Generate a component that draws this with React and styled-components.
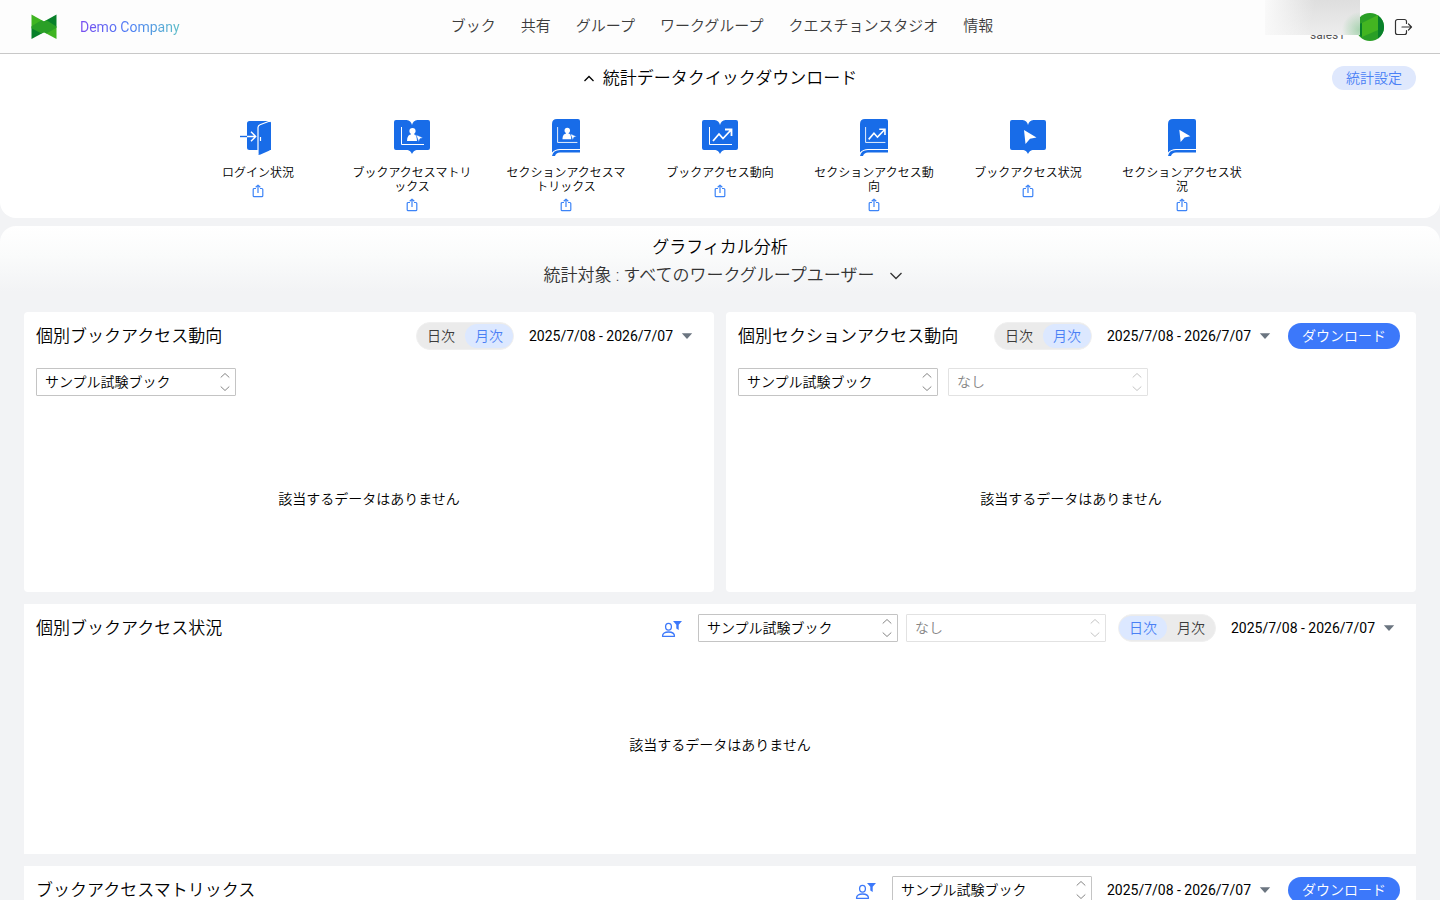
import React, { useState } from 'react';
import styled, { createGlobalStyle } from 'styled-components';

const GlobalStyle = createGlobalStyle`
  * {
    box-sizing: border-box;
  }

  body {
    margin: 0;
    background: #f2f3f5;
    color: #000;
    font-family: Roboto, "Noto Sans CJK JP", sans-serif;
    font-size: 14px;
    font-weight: 350;
  }

  button, select {
    font-family: inherit;
    font-weight: inherit;
    color: inherit;
  }
`;

const Page = styled.div`
  display: flex;
  flex-direction: column;
  height: 100vh;
  overflow: hidden;
`;

const Header = styled.header`
  display: grid;
  grid-template-columns: 1fr auto 1fr;
  align-items: center;
  flex-shrink: 0;
  height: 54px;
  padding: 0 24px 0 28px;
  background: #fdfdfd;
  border-bottom: 1px solid #c8c8c8;
`;

const Brand = styled.a`
  display: flex;
  align-items: center;
  gap: 20px;
  justify-self: start;
  text-decoration: none;
`;

const BrandName = styled.span`
  font-size: 14px;
  font-weight: 400;
  line-height: 20px;
  background: linear-gradient(90deg, #7a4df0, #4a7df5 50%, #5fc0c8);
  background-clip: text;
  color: transparent;
`;

const Nav = styled.nav`
  display: flex;
  gap: 25px;
  padding-bottom: 2px;
`;

const NavLink = styled.a`
  color: #3c3c3c;
  font-size: 15px;
  line-height: 20px;
  text-decoration: none;
  white-space: nowrap;
`;

const UserArea = styled.div`
  position: relative;
  display: flex;
  align-items: center;
  justify-content: flex-end;
  gap: 8px;
  height: 53px;
`;

const UserName = styled.span`
  align-self: flex-end;
  padding: 0 3px 11px 0;
  color: #555;
  font-size: 12px;
  font-weight: 400;
  line-height: 14px;
`;

const NameMask = styled.div`
  position: absolute;
  top: 0;
  right: 56px;
  width: 95px;
  height: 35px;
  background:
    radial-gradient(circle at 100% 85%, rgba(150, 205, 160, 0.8), rgba(150, 205, 160, 0) 18px),
    linear-gradient(100deg, #fafafa, rgba(250, 250, 250, 0) 50%),
    linear-gradient(#dedede, #ededed);
`;

const IconButton = styled.button`
  display: flex;
  align-items: center;
  justify-content: center;
  width: 24px;
  height: 24px;
  padding: 0;
  border: none;
  background: none;
  cursor: pointer;
`;

const FilterButton = styled(IconButton)`
  margin-right: 2px;
`;

const Content = styled.main`
  flex: 1;
  min-height: 0;
  overflow-y: auto;
  scrollbar-width: none;
`;

const QuickSection = styled.section`
  padding: 12px 24px 6px;
  background: #fff;
  border-radius: 0 0 16px 16px;
`;

const QuickHeader = styled.div`
  display: grid;
  grid-template-columns: 1fr auto 1fr;
  align-items: center;
  margin-bottom: 29px;
`;

const QuickTitle = styled.button`
  display: flex;
  align-items: center;
  gap: 8px;
  grid-column: 2;
  padding: 0;
  border: none;
  background: none;
  font-size: 17px;
  line-height: 24px;
  cursor: pointer;
`;

const SettingsButton = styled.button`
  justify-self: end;
  height: 24px;
  padding: 0 14px;
  border: none;
  border-radius: 12px;
  background: #dfe8fd;
  color: #4a80f5;
  font-size: 14px;
  line-height: 24px;
  cursor: pointer;
`;

const QuickList = styled.ul`
  display: flex;
  justify-content: center;
  gap: 30px;
  margin: 0;
  padding: 0;
  list-style: none;
`;

const QuickItem = styled.li`
  display: flex;
  flex-direction: column;
  align-items: center;
  width: 124px;
`;

const QuickLabel = styled.span`
  margin: 9px 0 4px;
  font-size: 12px;
  line-height: 14px;
  text-align: center;
  word-break: break-all;
  line-break: anywhere;
`;

const ShareButton = styled.button`
  display: flex;
  padding: 0;
  border: none;
  background: none;
  cursor: pointer;
`;

const Analysis = styled.section`
  margin-top: 8px;
  padding: 7px 24px 24px;
  border-radius: 16px 16px 0 0;
  background: linear-gradient(#fff, #fafbfb 30px, #f2f3f5 66px);
`;

const AnalysisTitle = styled.h2`
  margin: 0;
  font-size: 17px;
  font-weight: inherit;
  line-height: 28px;
  text-align: center;
`;

const TargetButton = styled.button`
  display: flex;
  align-items: center;
  gap: 16px;
  margin: 0 auto 23px;
  padding: 0 0 0 6px;
  border: none;
  background: none;
  color: #333;
  font-size: 17px;
  line-height: 28px;
  cursor: pointer;
`;

const CardGrid = styled.div`
  display: grid;
  grid-template-columns: 1fr 1fr;
  gap: 12px;
`;

const Card = styled.article`
  display: flex;
  flex-direction: column;
  grid-column: ${props => (props.$wide ? '1 / -1' : 'auto')};
  min-height: ${props => (props.$wide ? '250px' : '280px')};
  padding: 10px 12px;
  border-radius: ${props => (props.$wide ? '0' : '4px')};
  background: #fff;
`;

const CardHeader = styled.div`
  display: flex;
  align-items: center;
  gap: 12px;
  height: 28px;
  padding-right: 4px;
`;

const CardTitle = styled.h3`
  flex: 1;
  margin: 0;
  font-size: 17px;
  font-weight: inherit;
  line-height: 24px;
  white-space: nowrap;
`;

const SelectRow = styled.div`
  display: flex;
  gap: ${props => props.$gap || '10px'};
  margin-top: ${props => props.$top || '0'};
`;

const SelectBox = styled.div`
  position: relative;
  width: 200px;
  height: 28px;
`;

const SelectField = styled.select`
  appearance: none;
  width: 100%;
  height: 100%;
  padding: 0 24px 0 8px;
  border: 1px solid #c4c4c4;
  border-radius: 1px;
  background: #fff;
  font-size: 14px;

  &:disabled {
    border-color: #e2e2e2;
    color: #858585;
    opacity: 1;
  }
`;

const SelectArrows = styled.svg`
  position: absolute;
  top: 4px;
  right: 6px;
  stroke: ${props => (props.$disabled ? '#c4c4c4' : '#858585')};
  pointer-events: none;
`;

const Toggle = styled.div`
  display: flex;
  height: 28px;
  padding: 1px 0;
  border: 1px solid #f0f0f0;
  border-radius: 14px;
  background: #ebebeb;
`;

const ToggleOption = styled.button`
  width: 48px;
  height: 24px;
  padding: 0;
  border: none;
  border-radius: 12px;
  background: ${props => (props.$active ? '#dce8ff' : 'transparent')};
  color: ${props => (props.$active ? '#4a80f5' : '#3c3c3c')};
  font-size: 14px;
  line-height: 24px;
  cursor: pointer;
`;

const DateButton = styled.button`
  display: flex;
  align-items: center;
  gap: 8px;
  padding: 0 5px 0 3px;
  border: none;
  background: none;
  font-size: 14px;
  font-weight: 400;
  line-height: 28px;
  white-space: nowrap;
  cursor: pointer;
`;

const DownloadButton = styled.button`
  height: 26px;
  padding: 0 14px;
  border: none;
  border-radius: 13px;
  background: #3c78fa;
  color: #fff;
  font-size: 14px;
  line-height: 24px;
  white-space: nowrap;
  cursor: pointer;
`;

const EmptyMessage = styled.p`
  display: flex;
  flex: 1;
  align-items: center;
  justify-content: center;
  margin: 0;
  padding-top: ${props => (props.$wide ? '4px' : '20px')};
  line-height: 20px;
`;

const Logo = () => (
  <svg width="32" height="32" viewBox="0 0 32 32" aria-hidden="true">
    <path d="M3.500 3.500 16 10.500V16H3.500z" fill="#3fb421" />
    <path d="M28.500 3.500 16 10.500V16h12.500z" fill="#08802a" />
    <path d="M3.500 28 16 21.300V16H3.500z" fill="#08802a" />
    <path d="M28.500 28 16 21.300V16h12.500z" fill="#3fb421" />
    <path d="M3.500 15.200 13.500 9.200 16 10.500l2.500-1.300 10 6.300v1.300l-10 5.700L16 21.300l-2.500 1.200-10-5.300z" fill="#2a9f26" />
  </svg>
);

const Avatar = () => (
  <svg width="28" height="28" viewBox="0 0 28 28" role="img" aria-label="sales1">
    <circle cx="14" cy="14" r="14" fill="#2a9f26" />
    <path d="M22 2.500a14 14 0 0 1 0 23V17z" fill="#08802a" />
    <path d="M6 10 22 2v15L6 24z" fill="#43b521" />
    <path d="M0 12 6 10v14A14 14 0 0 1 0 14z" fill="#08802a" />
  </svg>
);

const LogoutIcon = () => (
  <svg width="20" height="20" viewBox="0 0 20 20" fill="none" stroke="#333" strokeWidth="1.200" strokeLinecap="round" strokeLinejoin="round">
    <path d="M12.500 6.500V4.500a2 2 0 0 0-2-2h-7a2 2 0 0 0-2 2v11a2 2 0 0 0 2 2h7a2 2 0 0 0 2-2v-2" />
    <path d="M8 10h9.500M14.500 7l3 3-3 3" />
  </svg>
);

const Chevron = ({ up }) => (
  <svg width="12" height="12" viewBox="0 0 12 12" fill="none" stroke="currentColor" strokeWidth="1.300">
    <path d={up ? 'M1.500 9 6 4.500 10.500 9' : 'M.5 4 6 9.500 11.500 4'} />
  </svg>
);

const ShareIcon = () => (
  <svg width="12" height="14" viewBox="0 0 12 14" fill="none" stroke="#3d84f7" strokeWidth="1.200" strokeLinejoin="round">
    <path d="M4 4.500H2.200a1 1 0 0 0-1 1v6.200a1 1 0 0 0 1 1h7.600a1 1 0 0 0 1-1V5.500a1 1 0 0 0-1-1H8" />
    <path d="M6 9V1.200M3.700 3.300 6 1.100l2.300 2.200" />
  </svg>
);

const UserFilterIcon = () => (
  <svg width="22" height="20" viewBox="0 0 22 20" fill="none" stroke="#3c78fa" strokeWidth="1.300">
    <ellipse cx="7.500" cy="8.800" rx="2.900" ry="3.400" />
    <path d="M1.500 18.300c0-3 2.500-4.300 6-4.300s6 1.300 6 4.300z" strokeLinejoin="round" />
    <path d="M12 3h9l-3.300 3.800V12L15.300 10.500V6.800z" fill="#3c78fa" stroke="none" />
  </svg>
);

const DoorIcon = () => (
  <svg width="36" height="38" viewBox="0 0 36 38" fill="none">
    <path d="M9.500 2H29a2 2 0 0 1 2 2v27H9.500a2.500 2.500 0 0 1-2.500-2.500v-24A2.500 2.500 0 0 1 9.500 2z" fill="#186ce8" />
    <path d="M18 8.500q0-2 2-2.800l8.500-3.200q2.500-.8 2.500 1.800V29q0 2-2 2.800l-8.500 3.800q-2.500.9-2.500-1.600z" fill="#186ce8" />
    <path d="M18 35V8.500q0-2 2-2.800l8.500-3.200q1.500-.5 2.200.3" stroke="#fff" strokeWidth="1.200" />
    <path d="M20.500 18v4" stroke="#fff" strokeWidth="1.200" />
    <path d="M0 17.500h8" stroke="#186ce8" strokeWidth="1.400" />
    <path d="M7 17.500h9M11 12.800l4.700 4.700-4.700 4.700" stroke="#fff" strokeWidth="1.400" />
  </svg>
);

const marks = {
  matrix: (
    <>
      <path d="M7.500 8v17.500H30" fill="none" stroke="#fff" strokeWidth="1" />
      <circle cx="18.500" cy="12" r="3.100" fill="#fff" />
      <path d="M17 13h3v2.500h-3zM13 22q0-7 5.500-7 3 0 4 2.200L23 22z" fill="#fff" />
      <path d="m22 15.700 7 3-3 1-1.300 3z" fill="#fff" stroke="#186ce8" strokeWidth=".5" />
    </>
  ),
  trend: (
    <>
      <path d="M7.500 8v17.500H30" fill="none" stroke="#fff" strokeWidth="1" />
      <path d="m11 22 6-7 4 4.500 8-8.500M23 10.500h6.500V17" fill="none" stroke="#fff" strokeWidth="1.800" />
    </>
  ),
  cursor: <path d="m14 11 12.500 7.500-6.500 1.300L15.500 25z" fill="#fff" />,
};

const BookIcon = ({ mark }) => (
  <svg width="36" height="38" viewBox="0 0 36 38">
    <path d="M2 1h10.500Q17 1.500 18 6q1-4.500 5.500-5H34a2 2 0 0 1 2 2v26a2 2 0 0 1-2 2H22.500Q19.500 31.500 18 35q-1.500-3.500-4.500-4H2a2 2 0 0 1-2-2V3a2 2 0 0 1 2-2z" fill="#186ce8" />
    {marks[mark]}
  </svg>
);

const SectionIcon = ({ mark }) => (
  <svg width="36" height="38" viewBox="0 0 36 38">
    <path d="M9 0h21a2 2 0 0 1 2 2v28H12q-5 0-8 3.500V5q0-5 5-5z" fill="#186ce8" />
    <path d="M4 37q1-6 8-6h20v2.500H12q-4 0-5 3.500z" fill="#186ce8" />
    <g transform="translate(3 1) scale(0.880)">{marks[mark]}</g>
  </svg>
);

const CaretIcon = () => (
  <svg width="12" height="12" viewBox="0 0 12 12">
    <path d="M.8 3.300h10.400L6 9z" fill="#6b7580" />
  </svg>
);

const navItems = ['ブック', '共有', 'グループ', 'ワークグループ', 'クエスチョンスタジオ', '情報'];

const downloads = [
  { label: 'ログイン状況', icon: <DoorIcon /> },
  { label: 'ブックアクセスマトリックス', icon: <BookIcon mark="matrix" /> },
  { label: 'セクションアクセスマトリックス', icon: <SectionIcon mark="matrix" /> },
  { label: 'ブックアクセス動向', icon: <BookIcon mark="trend" /> },
  { label: 'セクションアクセス動向', icon: <SectionIcon mark="trend" /> },
  { label: 'ブックアクセス状況', icon: <BookIcon mark="cursor" /> },
  { label: 'セクションアクセス状況', icon: <SectionIcon mark="cursor" /> },
];

const Select = ({ label, value, disabled }) => (
  <SelectBox>
    <SelectField aria-label={label} disabled={disabled} defaultValue={value}>
      <option value={value}>{value}</option>
    </SelectField>
    <SelectArrows width="10" height="20" viewBox="0 0 10 20" fill="none" $disabled={disabled}>
      <path d="M.7 5.500 5 1.500l4.300 4M.7 14.500l4.300 4 4.300-4" />
    </SelectArrows>
  </SelectBox>
);

const PeriodToggle = ({ initial }) => {
  const [period, setPeriod] = useState(initial);

  return (
    <Toggle role="group">
      {['日次', '月次'].map(name => (
        <ToggleOption
          key={name}
          type="button"
          $active={period === name}
          aria-pressed={period === name}
          onClick={() => setPeriod(name)}
        >
          {name}
        </ToggleOption>
      ))}
    </Toggle>
  );
};

const DateRange = () => (
  <DateButton type="button">
    2025/7/08 - 2026/7/07
    <CaretIcon />
  </DateButton>
);

const App = () => {
  return (
    <Page>
      <GlobalStyle />
      <Header>
        <Brand href="#">
          <Logo />
          <BrandName>Demo Company</BrandName>
        </Brand>
        <Nav>
          {navItems.map(item => (
            <NavLink key={item} href="#">{item}</NavLink>
          ))}
        </Nav>
        <UserArea>
          <UserName>sales1</UserName>
          <Avatar />
          <NameMask />
          <IconButton type="button" aria-label="ログアウト">
            <LogoutIcon />
          </IconButton>
        </UserArea>
      </Header>

      <Content>
        <QuickSection>
          <QuickHeader>
            <QuickTitle type="button">
              <Chevron up />
              統計データクイックダウンロード
            </QuickTitle>
            <SettingsButton type="button">統計設定</SettingsButton>
          </QuickHeader>
          <QuickList>
            {downloads.map(item => (
              <QuickItem key={item.label}>
                {item.icon}
                <QuickLabel>{item.label}</QuickLabel>
                <ShareButton type="button" aria-label={item.label}>
                  <ShareIcon />
                </ShareButton>
              </QuickItem>
            ))}
          </QuickList>
        </QuickSection>

        <Analysis>
          <AnalysisTitle>グラフィカル分析</AnalysisTitle>
          <TargetButton type="button">
            統計対象 : すべてのワークグループユーザー
            <Chevron />
          </TargetButton>

          <CardGrid>
            <Card>
              <CardHeader>
                <CardTitle>個別ブックアクセス動向</CardTitle>
                <PeriodToggle initial="月次" />
                <DateRange />
              </CardHeader>
              <SelectRow $top="18px">
                <Select label="ブック" value="サンプル試験ブック" />
              </SelectRow>
              <EmptyMessage>該当するデータはありません</EmptyMessage>
            </Card>

            <Card>
              <CardHeader>
                <CardTitle>個別セクションアクセス動向</CardTitle>
                <PeriodToggle initial="月次" />
                <DateRange />
                <DownloadButton type="button">ダウンロード</DownloadButton>
              </CardHeader>
              <SelectRow $top="18px">
                <Select label="ブック" value="サンプル試験ブック" />
                <Select label="セクション" value="なし" disabled />
              </SelectRow>
              <EmptyMessage>該当するデータはありません</EmptyMessage>
            </Card>

            <Card $wide>
              <CardHeader>
                <CardTitle>個別ブックアクセス状況</CardTitle>
                <FilterButton type="button" aria-label="ユーザー">
                  <UserFilterIcon />
                </FilterButton>
                <SelectRow $gap="8px">
                  <Select label="ブック" value="サンプル試験ブック" />
                  <Select label="セクション" value="なし" disabled />
                </SelectRow>
                <PeriodToggle initial="日次" />
                <DateRange />
              </CardHeader>
              <EmptyMessage $wide>該当するデータはありません</EmptyMessage>
            </Card>

            <Card $wide>
              <CardHeader>
                <CardTitle>ブックアクセスマトリックス</CardTitle>
                <FilterButton type="button" aria-label="ユーザー">
                  <UserFilterIcon />
                </FilterButton>
                <Select label="ブック" value="サンプル試験ブック" />
                <DateRange />
                <DownloadButton type="button">ダウンロード</DownloadButton>
              </CardHeader>
            </Card>
          </CardGrid>
        </Analysis>
      </Content>
    </Page>
  );
};

export default App;
